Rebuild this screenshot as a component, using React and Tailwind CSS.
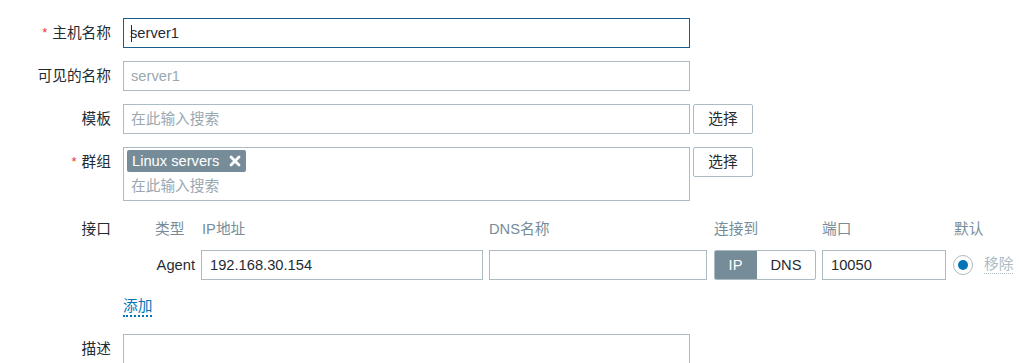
import React from "react";

const font = { fontFamily: '"Liberation Sans", Arial, "Noto Sans CJK SC", sans-serif' };

function Label({ children, required }) {
  return (
    <div className="w-[111px] h-[30px] flex items-center justify-end shrink-0 text-[#1f2c33]">
      {required && <span className="text-[#e33734] mr-[5px] text-[13px]">*</span>}
      {children}
    </div>
  );
}

function Box({ children, className = "" }) {
  return (
    <div
      className={`h-[30px] border border-[#acbbc2] bg-white flex items-center px-[7px] ${className}`}
    >
      {children}
    </div>
  );
}

function SelectButton() {
  return (
    <button className="ml-[3px] w-[60px] h-[30px] border border-[#acbbc2] rounded-[2px] bg-white text-[#1f2c33] flex items-center justify-center">
      选择
    </button>
  );
}

export default function App() {
  return (
    <div
      style={font}
      className="w-[1019px] h-[363px] overflow-hidden bg-white pt-[18px] text-[14.7px] leading-[18px] text-[#1f2c33]"
    >
      {/* 主机名称 */}
      <div className="flex gap-[12px]">
        <Label required>主机名称</Label>
        <div className="w-[567px] h-[30px] border border-[#1c5d8d] flex items-center px-[7px]">
          <span className="w-px h-[17px] bg-[#1f2c33] -mr-[2px]" />
          server1
        </div>
      </div>

      {/* 可见的名称 */}
      <div className="flex gap-[12px] mt-[13px]">
        <Label>可见的名称</Label>
        <Box className="w-[567px] text-[#9aa8b0]">server1</Box>
      </div>

      {/* 模板 */}
      <div className="flex gap-[12px] mt-[13px]">
        <Label>模板</Label>
        <div className="flex">
          <Box className="w-[567px] text-[#9aa8b0]">在此输入搜索</Box>
          <SelectButton />
        </div>
      </div>

      {/* 群组 */}
      <div className="flex gap-[12px] mt-[13px]">
        <Label required>群组</Label>
        <div className="flex items-start">
          <div className="w-[567px] h-[54px] border border-[#acbbc2] pl-[3px] pt-[2px]">
            <div className="inline-flex items-center h-[22px] rounded-[2px] bg-[#768d99] text-white pl-[5px] pr-[5px]">
              Linux servers
              <svg className="ml-[10px]" width="12" height="12" viewBox="0 0 12 12">
                <path d="M2 2 L10 10 M10 2 L2 10" stroke="white" strokeWidth="2.8" strokeLinecap="round" />
              </svg>
            </div>
            <div className="pl-[4px] mt-[5px] text-[#9aa8b0]">在此输入搜索</div>
          </div>
          <SelectButton />
        </div>
      </div>

      {/* 接口 */}
      <div className="flex gap-[12px] mt-[19px]">
        <div className="w-[111px] h-[18px] flex items-center justify-end shrink-0">接口</div>
        <div className="pl-[32px]">
          <div className="flex h-[18px] items-center text-[#768d99]">
            <div className="w-[40px]">类型</div>
            <div className="w-[282px] ml-[6px] pl-[1px]">IP地址</div>
            <div className="w-[218px] ml-[6px]">DNS名称</div>
            <div className="w-[102px] ml-[7px]">连接到</div>
            <div className="w-[124px] ml-[6px]">端口</div>
            <div className="ml-[8px]">默认</div>
          </div>
          <div className="flex items-center h-[30px] mt-[12px]">
            <div className="w-[40px] text-right">Agent</div>
            <Box className="w-[282px] ml-[6px] pl-[8px]">192.168.30.154</Box>
            <Box className="w-[218px] ml-[6px]" />
            <div className="w-[102px] ml-[7px] h-[30px] flex rounded-[2px] border border-[#acbbc2] overflow-hidden">
              <div className="w-[43px] -ml-px -my-px bg-[#768d99] text-white flex items-center justify-center rounded-l-[2px]">
                IP
              </div>
              <div className="flex-1 flex items-center justify-center">DNS</div>
            </div>
            <Box className="w-[124px] ml-[6px] pl-[8px]">10050</Box>
            <div className="ml-[7px] w-[20px] h-[20px] rounded-full border border-[#acbbc2] flex items-center justify-center">
              <div className="w-[10px] h-[10px] rounded-full bg-[#0275b8]" />
            </div>
            <span className="ml-[11px] text-[#acbbc2] border-b border-dotted border-[#acbbc2] leading-[17px]">
              移除
            </span>
          </div>
        </div>
      </div>

      {/* 添加 */}
      <div className="flex gap-[12px] mt-[18px]">
        <div className="w-[111px] shrink-0" />
        <span className="text-[#0275b8] border-b-[2px] border-dotted border-[#0275b8] leading-[17px]">
          添加
        </span>
      </div>

      {/* 描述 */}
      <div className="flex gap-[12px] mt-[17px]">
        <Label>描述</Label>
        <div className="w-[567px] h-[60px] border border-[#acbbc2]" />
      </div>
    </div>
  );
}
